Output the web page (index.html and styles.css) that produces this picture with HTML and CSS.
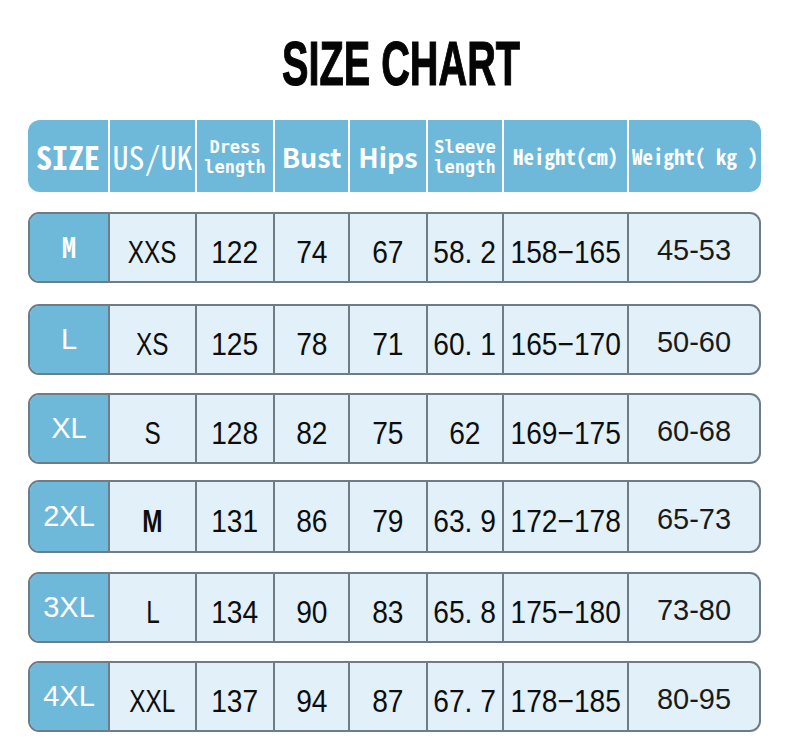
FILE: index.html
```html
<!DOCTYPE html>
<html lang="en">
<head>
<meta charset="utf-8">
<title>Size Chart</title>
<link rel="stylesheet" href="styles.css">
</head>
<body>
<div class="page">
  <h1 class="title"><span class="title-text">SIZE CHART</span></h1>
  <div class="chart">
    <div class="row head">
      <div class="cell"><span class="h-size">SIZE</span></div>
      <div class="cell"><span class="h-us">US/UK</span></div>
      <div class="cell"><span class="h-two"><span class="line">Dress</span><span class="line">length</span></span></div>
      <div class="cell"><span class="h-bold">Bust</span></div>
      <div class="cell"><span class="h-bold">Hips</span></div>
      <div class="cell"><span class="h-two"><span class="line">Sleeve</span><span class="line">length</span></span></div>
      <div class="cell"><span class="h-small">Height(cm)</span></div>
      <div class="cell"><span class="h-small">Weight( kg )</span></div>
    </div>

    <div class="row data r1">
      <div class="cell size"><span class="s-mono">M</span></div>
      <div class="cell"><span class="v v-l">XXS</span></div>
      <div class="cell"><span class="v">122</span></div>
      <div class="cell"><span class="v">74</span></div>
      <div class="cell"><span class="v">67</span></div>
      <div class="cell"><span class="v">58. 2</span></div>
      <div class="cell"><span class="v">158−165</span></div>
      <div class="cell"><span class="w">45-53</span></div>
    </div>

    <div class="row data r2">
      <div class="cell size"><span class="s">L</span></div>
      <div class="cell"><span class="v v-l">XS</span></div>
      <div class="cell"><span class="v">125</span></div>
      <div class="cell"><span class="v">78</span></div>
      <div class="cell"><span class="v">71</span></div>
      <div class="cell"><span class="v">60. 1</span></div>
      <div class="cell"><span class="v">165−170</span></div>
      <div class="cell"><span class="w">50-60</span></div>
    </div>

    <div class="row data r3">
      <div class="cell size"><span class="s">XL</span></div>
      <div class="cell"><span class="v v-l">S</span></div>
      <div class="cell"><span class="v">128</span></div>
      <div class="cell"><span class="v">82</span></div>
      <div class="cell"><span class="v">75</span></div>
      <div class="cell"><span class="v">62</span></div>
      <div class="cell"><span class="v">169−175</span></div>
      <div class="cell"><span class="w">60-68</span></div>
    </div>

    <div class="row data r4">
      <div class="cell size"><span class="s">2XL</span></div>
      <div class="cell"><span class="v v-l v-m">M</span></div>
      <div class="cell"><span class="v">131</span></div>
      <div class="cell"><span class="v">86</span></div>
      <div class="cell"><span class="v">79</span></div>
      <div class="cell"><span class="v">63. 9</span></div>
      <div class="cell"><span class="v">172−178</span></div>
      <div class="cell"><span class="w">65-73</span></div>
    </div>

    <div class="row data r5">
      <div class="cell size"><span class="s">3XL</span></div>
      <div class="cell"><span class="v v-l">L</span></div>
      <div class="cell"><span class="v">134</span></div>
      <div class="cell"><span class="v">90</span></div>
      <div class="cell"><span class="v">83</span></div>
      <div class="cell"><span class="v">65. 8</span></div>
      <div class="cell"><span class="v">175−180</span></div>
      <div class="cell"><span class="w">73-80</span></div>
    </div>

    <div class="row data r6">
      <div class="cell size"><span class="s">4XL</span></div>
      <div class="cell"><span class="v v-l">XXL</span></div>
      <div class="cell"><span class="v">137</span></div>
      <div class="cell"><span class="v">94</span></div>
      <div class="cell"><span class="v">87</span></div>
      <div class="cell"><span class="v">67. 7</span></div>
      <div class="cell"><span class="v">178−185</span></div>
      <div class="cell"><span class="w">80-95</span></div>
    </div>
  </div>
</div>
</body>
</html>
```

FILE: styles.css
```css
* { box-sizing: border-box; }

html, body {
  margin: 0;
  padding: 0;
  background: #ffffff;
}

body {
  font-family: "Liberation Sans", Arial, sans-serif;
  color: #111;
}

.page {
  width: 790px;
  padding: 0 0 0 28px;
}

.title {
  margin: 0;
  padding: 32px 0 0 12px;
  width: 733px;
  height: 120px;
  text-align: center;
  font-family: "Liberation Sans", Arial, sans-serif;
  font-weight: 700;
  font-size: 63px;
  line-height: 63px;
  color: #050505;
}

.title-text {
  display: inline-block;
  transform: scaleX(0.63);
  -webkit-text-stroke: 1.2px #050505;
  white-space: nowrap;
}

.chart {
  width: 733px;
  display: flex;
  flex-direction: column;
}

.row {
  display: grid;
}

.head {
  height: 72px;
  grid-template-columns: 80px 87px 78px 75px 78px 76px 125px 134px;
  background: #6eb8d9;
  border-radius: 12px;
  overflow: hidden;
  color: #ffffff;
}

.head .cell + .cell {
  border-left: 2px solid #ffffff;
}

.cell {
  display: flex;
  align-items: center;
  justify-content: center;
  white-space: nowrap;
}

.h-size,
.h-us,
.h-small,
.s-mono {
  font-family: "Noto Sans CJK SC", "DejaVu Sans", sans-serif;
  font-feature-settings: "hwid" 1;
}

.h-size {
  font-size: 32px;
  font-weight: 700;
  line-height: 1;
}

.h-us {
  font-size: 32px;
  font-weight: 400;
  line-height: 1;
}

.h-two {
  display: flex;
  flex-direction: column;
  align-items: center;
  font-family: "DejaVu Sans Mono", "Liberation Mono", monospace;
  font-size: 17px;
  font-weight: 700;
  line-height: 20px;
  margin-top: 1px;
}

.line {
  display: block;
  height: 20px;
}

.h-bold {
  font-family: "Noto Sans CJK SC", "DejaVu Sans", sans-serif;
  font-size: 27px;
  font-weight: 700;
  line-height: 1;
}

.h-small {
  font-size: 21px;
  font-weight: 700;
  line-height: 1;
}

.data {
  height: 71px;
  grid-template-columns: 78px 87px 78px 75px 78px 76px 125px 132px;
  background: #e1f0f9;
  border: 2px solid #6e7c85;
  border-radius: 11px;
  overflow: hidden;
}

.data .cell + .cell {
  border-left: 2px solid #6e7c85;
}

.r1 { margin-top: 20px; }
.r2 { margin-top: 21px; }
.r3 { margin-top: 18px; }
.r4 { margin-top: 16px; height: 73px; }
.r5 { margin-top: 19px; }
.r6 { margin-top: 18px; }

.size {
  background: #6eb8d9;
  color: #ffffff;
}

.s {
  font-family: "Liberation Sans", Arial, sans-serif;
  font-size: 29px;
  line-height: 1;
}

.s-mono {
  font-size: 28px;
  font-weight: 700;
  line-height: 1;
  margin-top: -4px;
}

.v {
  display: inline-block;
  font-family: "Liberation Sans", Arial, sans-serif;
  font-size: 32px;
  line-height: 1;
  color: #0d0d0d;
  margin-top: 8px;
  transform: scaleX(0.88);
}

.v-l {
  transform: scaleX(0.76);
}

.v-m {
  font-weight: 700;
}

.w {
  font-family: "Liberation Sans", Arial, sans-serif;
  font-size: 29px;
  line-height: 1;
  color: #1a1a1a;
  margin-top: 5px;
}
```
